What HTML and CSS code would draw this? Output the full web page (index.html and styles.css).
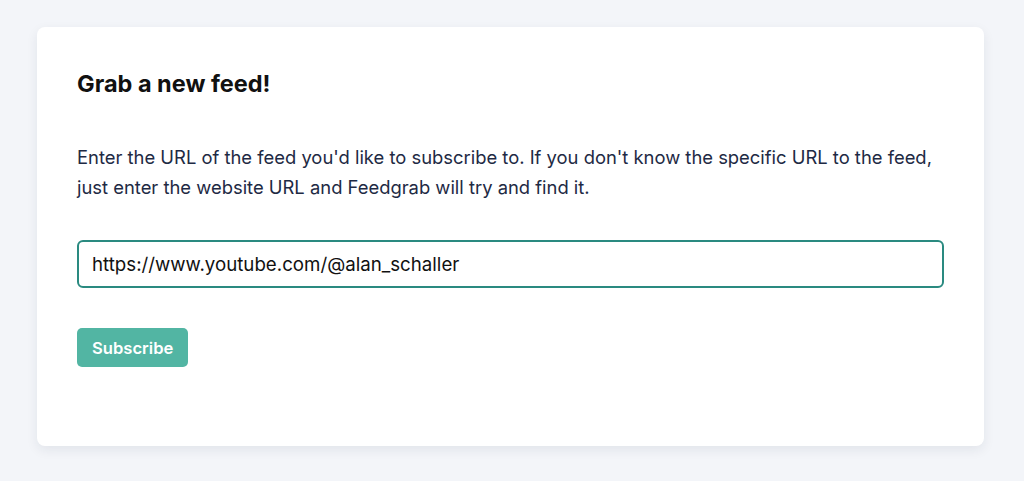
FILE: index.html
```html
<!DOCTYPE html>
<html lang="en">
<head>
    <meta charset="UTF-8">
    <meta name="viewport" content="width=device-width, initial-scale=1.0">
    <title>Feedgrab - Subscribe</title>
    <link rel="stylesheet" href="styles.css">
</head>
<body>

    <div class="card">
        <h1>Grab a new feed!</h1>

        <p class="intro">Enter the URL of the feed you'd like to subscribe to. If you don't know the specific URL to the feed, just enter the website URL and Feedgrab will try and find it.</p>

        <form class="subscribe-form">
            <input type="text" id="feed_url" class="url-input" value="https://www.youtube.com/@alan_schaller" autofocus>
            <div class="actions">
                <button type="submit">Subscribe</button>
            </div>
        </form>
    </div>

</body>
</html>
```

FILE: styles.css
```css
/* Page */
body {
    font-family: 'Inter', 'Liberation Sans', sans-serif;
    background-color: #f3f5f9;
    margin: 0;
    padding: 27px 40px 35px 37px;
}

/* Main card */
.card {
    background-color: #fff;
    border-radius: 8px;
    padding: 42px 40px 79px 40px;
    box-shadow: 0 4px 12px rgba(30, 40, 70, 0.08);
}

h1 {
    margin: 0;
    font-size: 23.5px;
    line-height: 30px;
    font-weight: 700;
    color: #111;
}

.intro {
    margin: 43px 0 0 0;
    font-size: 18.4px;
    line-height: 30px;
    color: #1e2a44;
}

/* Form */
.subscribe-form {
    margin-top: 38px;
}

.url-input {
    display: block;
    width: 100%;
    height: 48px;
    box-sizing: border-box;
    padding: 0 13px;
    font-family: inherit;
    font-size: 18.7px;
    color: #111;
    caret-color: #000;
    border: 2px solid #2a8a80;
    border-radius: 6px;
    outline: none;
}

.actions {
    margin-top: 40px;
}

button {
    background-color: #52b5a3;
    color: #fff;
    height: 39px;
    padding: 0 15px;
    border: none;
    border-radius: 5px;
    font-family: inherit;
    font-size: 16.6px;
    font-weight: 600;
    cursor: pointer;
}

button:hover {
    background-color: #47a694;
}
```
